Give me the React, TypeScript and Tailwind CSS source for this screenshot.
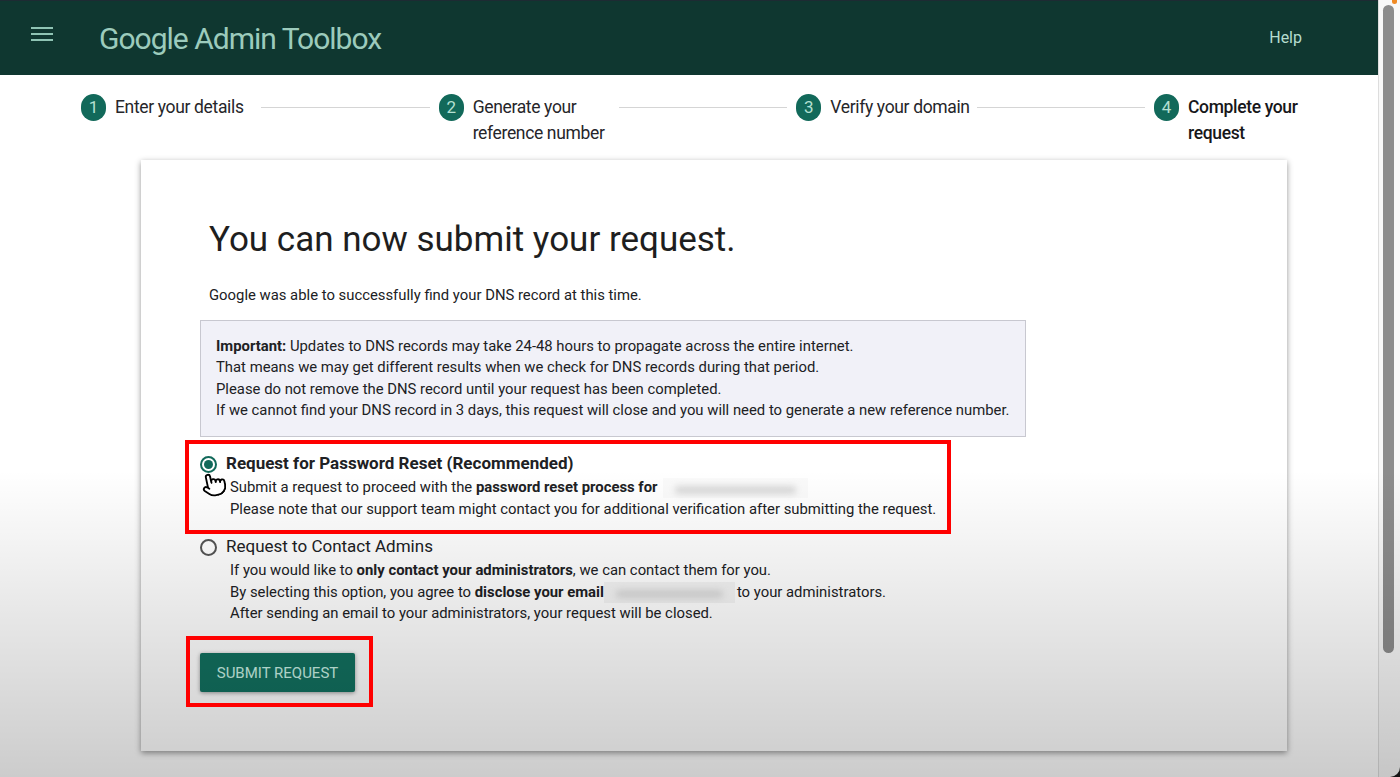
import { Pointer } from "lucide-react";

const steps = [
  { n: 1, label: "Enter your details", w: "w-[137px]" },
  { n: 2, label: "Generate your\nreference number", w: "w-[137px]" },
  { n: 3, label: "Verify your domain", w: "w-[138px]" },
  { n: 4, label: "Complete your\nrequest", w: "w-[110px]" },
];

function Blur({ className, tone }: { className: string; tone: string }) {
  return (
    <span className={`inline-block align-middle ${tone} ${className}`}>
      <span className="block h-[8px] mx-[12px] mt-[8px] rounded-full bg-[#d8d8d8] blur-[3px]" />
    </span>
  );
}

export default function App() {
  return (
    <div className="relative h-[777px] w-[1400px] overflow-hidden bg-white font-['Roboto','Liberation_Sans',sans-serif] text-[#202124]">
      <div className="flex h-full">
        <div className="flex-1 min-w-0">
          {/* Top bar */}
          <header className="h-[75px] bg-[#0f3730] border-t border-[#1d2b33] flex items-center pl-[31px] pr-[76px]">
            <svg width="22" height="14" viewBox="0 0 22 14" className="mb-[8px]" fill="#8fc4b4">
              <rect x="0" y="0" width="22" height="2" />
              <rect x="0" y="6" width="22" height="2" />
              <rect x="0" y="12" width="22" height="2" />
            </svg>
            <span className="ml-[46px] text-[30px] tracking-[-1px] font-normal text-[#9ccbbc]">Google Admin Toolbox</span>
            <span className="ml-auto text-[16px] text-[#b5dccf]">Help</span>
          </header>

          {/* Stepper */}
          <div className="flex items-start pl-[81px] pr-[80px] pt-[19px] h-[85px]">
            {steps.map((s, i) => (
              <div key={s.n} className={`flex items-start ${i < 3 ? "flex-1" : ""}`}>
                <span className="w-[25px] h-[27px] shrink-0 rounded-full bg-[#12695a] text-[#b4e0d2] text-[17px] flex items-center justify-center">
                  {s.n}
                </span>
                <span className={`ml-[9px] shrink-0 ${s.w} whitespace-pre text-[17.5px] leading-[26px] tracking-[-0.35px] ${s.n === 4 ? "font-medium text-[#17171a]" : "text-[#26262a]"}`}>
                  {s.label}
                </span>
                {i < 3 && <span className="flex-1 h-px bg-[#d5d5d5] mt-[13px] mx-[9px]" />}
              </div>
            ))}
          </div>

          {/* Card */}
          <main className="ml-[141px] w-[1146px] h-[591px] bg-white shadow-[0_2px_6px_rgba(0,0,0,0.42)] pl-[59px] pt-[58px]">
            <h1 className="pl-[9px] text-[35px] leading-[44px] text-[#1e1e20]">You can now submit your request.</h1>
            <p className="pl-[9px] mt-[23px] text-[14.85px] leading-[21px]">Google was able to successfully find your DNS record at this time.</p>

            <div className="mt-[14px] w-[826px] h-[117px] bg-[#f1f1f8] border border-[#c8c8d0] pl-[15px] pt-[15px] text-[14.85px] leading-[21.4px]">
              <p><b className="font-bold">Important:</b> Updates to DNS records may take 24-48 hours to propagate across the entire internet.</p>
              <p>That means we may get different results when we check for DNS records during that period.</p>
              <p>Please do not remove the DNS record until your request has been completed.</p>
              <p>If we cannot find your DNS record in 3 days, this request will close and you will need to generate a new reference number.</p>
            </div>

            <div className="mt-[16px]">
              <div className="flex items-center h-[22px]">
                <span className="w-[17px] h-[17px] rounded-full border-2 border-[#12695a] flex items-center justify-center">
                  <span className="w-[9px] h-[9px] rounded-full bg-[#12695a]" />
                </span>
                <span className="ml-[9px] text-[17px] font-bold">Request for Password Reset (Recommended)</span>
              </div>
              <div className="pl-[30px] pt-[1px] text-[14.85px] leading-[22px]">
                <p>Submit a request to proceed with the <b className="font-bold">password reset process for</b><Blur tone="bg-[#fafafa]" className="ml-[6px] w-[145px] h-[20px]" /></p>
                <p>Please note that our support team might contact you for additional verification after submitting the request.</p>
              </div>
            </div>

            <div className="mt-[16px]">
              <div className="flex items-center h-[22px]">
                <span className="w-[17px] h-[17px] rounded-full border-2 border-[#555]" />
                <span className="ml-[9px] text-[17px]">Request to Contact Admins</span>
              </div>
              <div className="pl-[30px] pt-[2px] text-[14.85px] leading-[21.5px]">
                <p>If you would like to <b className="font-bold">only contact your administrators</b>, we can contact them for you.</p>
                <p>By selecting this option, you agree to <b className="font-bold">disclose your email</b><Blur tone="bg-[#f4f4f4]" className="w-[131px] h-[21px]" /><span className="ml-[2px]">to your administrators.</span></p>
                <p>After sending an email to your administrators, your request will be closed.</p>
              </div>
            </div>

            <button className="mt-[28px] w-[155px] h-[39px] pt-[2px] rounded-[2px] bg-[#12705f] text-[#c8f0e4] text-[15px] shadow-[0_1px_4px_rgba(0,0,0,0.4)]">
              SUBMIT REQUEST
            </button>
          </main>
        </div>

        {/* Scrollbar */}
        <div className="w-[22px] shrink-0 bg-[#1a1a1a]">
          <div className="h-full rounded-br-[10px] bg-[#f8f8f8] border-l border-[#dddddd] pt-[5px] pl-[4px] pr-[6px]">
            <div className="h-[648px] rounded-full bg-[#8c8c8c]" />
          </div>
        </div>
      </div>

      {/* Video fade over the lower half */}
      <div className="absolute left-0 right-0 top-[470px] bottom-0 pointer-events-none bg-gradient-to-b from-black/0 to-black/20" />

      {/* Annotations */}
      <div className="absolute left-[185px] top-[440px] w-[766px] h-[94px] border-[4px] border-[#ff0000]" />
      <div className="absolute left-[186px] top-[636px] w-[187px] h-[71px] border-[4px] border-[#ff0000]" />
      <span className="absolute left-[1392px] top-0 w-[5px] h-[4px] rounded-b-full bg-[#f08a24]" />
      <Pointer className="absolute left-[201px] top-[471px] w-[26px] h-[27px] -rotate-12 text-black fill-white" strokeWidth={1.7} />
    </div>
  );
}
